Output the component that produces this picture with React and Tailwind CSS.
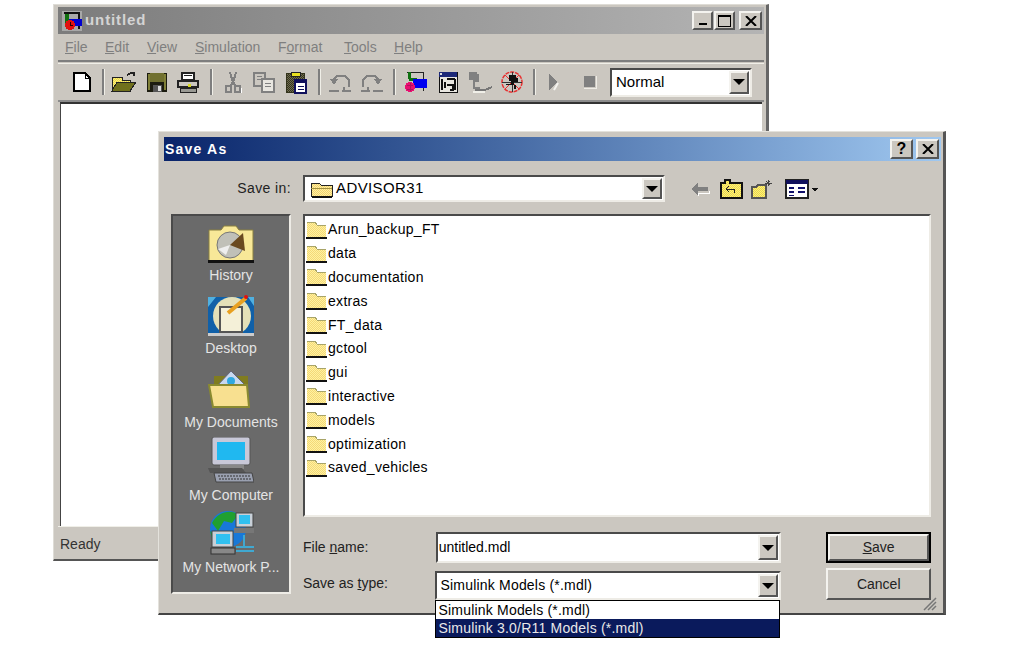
const sunken = "border-2 border-t-[#4a4a4a] border-l-[#4a4a4a] border-r-[#eeece6] border-b-[#eeece6]";
const raised = "border-2 border-t-[#f4f3ef] border-l-[#f4f3ef] border-r-[#555] border-b-[#555]";

function Dither({ id, a = "#ffff66", b = "#e8c860" }) {
	return (
		<pattern id={id} width="2" height="2" patternUnits="userSpaceOnUse">
			<rect width="2" height="2" fill={a} />
			<rect width="1" height="1" fill={b} />
			<rect x="1" y="1" width="1" height="1" fill={b} />
		</pattern>
	);
}

function Px({ children, w = 24, h = 24, className = "" }) {
	return (
		<svg width={w} height={h} viewBox={`0 0 ${w} ${h}`} shapeRendering="crispEdges" className={`block ${className}`}>
			{children}
		</svg>
	);
}

const NewIcon = () => (
	<Px>
		<path d="M4 3h11l5 5v13H4z" fill="#fff" stroke="#000" strokeWidth="2" />
		<path d="M15 3v5h5" fill="none" stroke="#000" strokeWidth="1" />
	</Px>
);
const OpenIcon = () => (
	<Px w={26}>
		<defs><Dither id="open" /></defs>
		<path d="M1 7h10v3h8v11H1z" fill="url(#open)" stroke="#222" />
		<path d="M1 21l5-9h19l-6 9z" fill="#70701c" stroke="#222" />
		<path d="M16 5l4-2h3v1M23 3v3" fill="none" stroke="#222" strokeWidth="2" />
	</Px>
);
const SaveIcon = () => (
	<Px w={22}>
		<rect x="1" y="3" width="20" height="19" fill="#1c1c10" />
		<rect x="4" y="3" width="14" height="9" fill="#707030" />
		<rect x="2" y="4" width="2" height="16" fill="#808038" />
		<rect x="18" y="4" width="2" height="16" fill="#808038" />
		<rect x="7" y="15" width="9" height="7" fill="#555" />
		<rect x="12" y="16" width="3" height="5" fill="#ddd" />
	</Px>
);
const PrintIcon = () => (
	<Px w={24}>
		<path d="M6 3h12v7H6z" fill="#fff" stroke="#222" strokeWidth="2" />
		<path d="M2 11h20v6H2z" fill="#cbc7c0" stroke="#222" strokeWidth="2" />
		<path d="M4 18h16v4H4z" fill="#9a9a94" stroke="#222" />
		<rect x="8" y="5" width="8" height="1" fill="#222" />
		<rect x="12" y="14" width="3" height="3" fill="#d8d820" />
	</Px>
);
const CutIcon = () => (
	<Px>
		<path d="M9 2l3 11 3-11" fill="none" stroke="#808080" strokeWidth="2" />
		<path d="M12 12l-3 4M12 12l3 4" stroke="#808080" strokeWidth="2" />
		<rect x="5" y="16" width="5" height="6" fill="none" stroke="#808080" strokeWidth="2" />
		<rect x="14" y="16" width="5" height="6" fill="none" stroke="#808080" strokeWidth="2" />
		<path d="M20 18v5" stroke="#fff" />
	</Px>
);
const CopyIcon = () => (
	<Px>
		<rect x="2" y="3" width="11" height="13" fill="#cbc7c0" stroke="#808080" strokeWidth="2" />
		<rect x="5" y="6" width="5" height="1" fill="#808080" />
		<rect x="5" y="9" width="5" height="1" fill="#808080" />
		<rect x="10" y="9" width="12" height="13" fill="#e8e6e0" stroke="#808080" strokeWidth="2" />
		<rect x="13" y="13" width="6" height="1" fill="#808080" />
		<rect x="13" y="16" width="6" height="1" fill="#808080" />
	</Px>
);
const PasteIcon = () => (
	<Px>
		<defs><Dither id="paste" a="#6e6a50" b="#34341c" /></defs>
		<rect x="2" y="3" width="18" height="19" fill="url(#paste)" stroke="#33331c" />
		<rect x="7" y="2" width="9" height="4" fill="#e8e020" stroke="#222" />
		<rect x="11" y="10" width="11" height="13" fill="#fff" stroke="#10105c" strokeWidth="2" />
		<rect x="11" y="10" width="11" height="3" fill="#10105c" />
		<rect x="14" y="16" width="6" height="1" fill="#10105c" />
		<rect x="14" y="19" width="6" height="1" fill="#10105c" />
	</Px>
);
const UndoIcon = ({ flip }) => (
	<Px className={flip ? "-scale-x-100" : ""}>
		<path d="M6 14V9l3-3h8l4 4v7" fill="none" stroke="#808080" strokeWidth="2" />
		<path d="M2 9h8l-4 6z" fill="#808080" />
		<rect x="1" y="20" width="10" height="2" fill="#808080" />
		<rect x="14" y="20" width="9" height="2" fill="#808080" />
		<rect x="15" y="17" width="2" height="3" fill="#808080" />
	</Px>
);
const LibIcon = () => (
	<Px>
		<path d="M3 2h16M19 2v19" stroke="#222" strokeWidth="1" fill="none" />
		<rect x="4" y="2" width="3" height="7" fill="#107010" />
		<rect x="5" y="8" width="8" height="3" fill="#107010" />
		<rect x="9" y="9" width="14" height="9" fill="#0000f0" />
		<circle cx="6" cy="17" r="5" fill="#e81070" />
		<path d="M3 15h6M3 19h6M6 13v8" stroke="#b01060" />
	</Px>
);
const ModelIcon = () => (
	<Px w={22}>
		<rect x="2" y="2" width="18" height="20" fill="#e8e6e0" stroke="#111" />
		<rect x="2" y="2" width="18" height="5" fill="#1c2878" />
		<path d="M5 9v11M10 9h8M18 9v11M10 15h6v5h-3M8 12v6" stroke="#111" fill="none" strokeWidth="2" />
		<rect x="3" y="3" width="2" height="2" fill="#ddd" />
	</Px>
);
const DebugIcon = () => (
	<Px w={26}>
		<path d="M2 2h8v2h2v8h-6v-2h-4z" fill="#808080" />
		<path d="M7 12v6h6" stroke="#808080" strokeWidth="2" fill="none" />
		<path d="M8 20h10l7-3" stroke="#777" strokeWidth="2" fill="none" />
		<path d="M6 22h12" stroke="#f0efe8" strokeWidth="2" />
	</Px>
);
const BanIcon = () => (
	<Px>
		<circle cx="12" cy="12" r="10" fill="#cbc7c0" stroke="#e83030" strokeWidth="1.5" strokeDasharray="4 1" shapeRendering="auto" />
		<path d="M5 5l14 14M19 5L5 19" stroke="#e83030" />
		<path d="M2 12h20M12 2v20" stroke="#333" />
		<path d="M9 5h7v3h2v4h-4v3h-3v-4H9z" fill="#111" />
		<path d="M6 14h5v1H6zM14 15h2v4h-2z" fill="#111" />
	</Px>
);
const PlayIcon = () => (
	<Px w={14}>
		<path d="M3 3l8 9-8 9z" fill="#808080" />
		<path d="M8 20l4-7" stroke="#f4f3ef" strokeWidth="2" shapeRendering="auto" />
	</Px>
);
const StopIcon = () => (
	<Px w={14} h={14}>
		<rect x="1" y="1" width="11" height="11" fill="#808080" />
		<path d="M13 1v12H1" fill="none" stroke="#eeece6" />
	</Px>
);

function Sep({ w }) {
	return (
		<div className={`flex justify-center ${w}`}>
			<div className="w-[3px] h-[26px] bg-[#7e7e7e] border-r border-r-[#f0efe8]" />
		</div>
	);
}

function Tool({ w, children }) {
	return <div className={`flex justify-center ${w}`}>{children}</div>;
}

function DownBtn({ size = "w-[20px]" }) {
	return (
		<div className={`${size} h-full bg-[#cbc7c0] flex items-center justify-center ${raised}`}>
			<div className="border-x-[6px] border-x-transparent border-t-[6px] border-t-black" />
		</div>
	);
}

function Combo({ className = "", text, textClass = "" }) {
	return (
		<div className={`bg-white flex items-stretch ${sunken} ${className}`}>
			<div className={`flex-1 flex items-center text-black overflow-hidden whitespace-nowrap ${textClass}`}>{text}</div>
			<div className="p-[1px]"><DownBtn /></div>
		</div>
	);
}

function MainWindow() {
	return (
		<div className="absolute left-[53px] top-[4px] w-[716px] h-[557px] bg-[#cbc7c0] flex flex-col pl-[4px] pr-[2px] pt-[2px] border border-t-[#dedcd6] border-l-[#dedcd6] border-r-[3px] border-r-[#666] border-b-2 border-b-[#555]">
			<div className="h-[27px] shrink-0 flex items-center bg-gradient-to-r from-[#7c7c7c] to-[#b4b4b4] pl-[4px] pr-[2px]">
				<Px w={20} h={20}>
					<rect width="20" height="20" fill="#a8a8a8" />
					<path d="M2 2h15v16" fill="none" stroke="#111" strokeWidth="2" />
					<rect x="3" y="3" width="4" height="9" fill="#107010" />
					<rect x="7" y="8" width="13" height="7" fill="#0000d0" />
					<circle cx="8" cy="14" r="5" fill="#e01010" />
					<path d="M8 11v3h3" stroke="#300" fill="none" />
				</Px>
				<span className="ml-[3px] text-[15px] font-bold text-[#d4d4d4] tracking-[0.9px]">untitled</span>
				<div className="ml-auto flex">
					<div className={`w-[21px] h-[19px] bg-[#cbc7c0] flex items-end justify-center pb-[3px] ${raised}`}><div className="w-[8px] h-[2px] bg-black" /></div>
					<div className={`ml-[1px] w-[21px] h-[19px] bg-[#cbc7c0] flex items-center justify-center ${raised}`}><div className="w-[13px] h-[12px] border border-t-2 border-black" /></div>
					<div className={`ml-[4px] w-[23px] h-[19px] bg-[#cbc7c0] flex items-center justify-center ${raised}`}>
						<svg width="12" height="10" viewBox="0 0 12 10"><path d="M1 0l10 10M11 0L1 10" stroke="#000" strokeWidth="2" /></svg>
					</div>
				</div>
			</div>
			<div className="h-[26px] shrink-0 flex items-center text-[14px] text-[#7f7f7f] pl-[7px] pt-[1px]">
				<span className="w-[40px]"><u>F</u>ile</span>
				<span className="w-[42px]"><u>E</u>dit</span>
				<span className="w-[48px]"><u>V</u>iew</span>
				<span className="w-[83px]"><u>S</u>imulation</span>
				<span className="w-[66px]">F<u>o</u>rmat</span>
				<span className="w-[50px]"><u>T</u>ools</span>
				<span><u>H</u>elp</span>
			</div>
			<div className="h-[4px] shrink-0 border-t-2 border-t-[#7e7e7e] border-b border-b-[#f0efe8]" />
			<div className="h-[38px] shrink-0 flex items-center pl-[8px] border-b-2 border-b-[#8c8c8c]">
				<Tool w="w-[32px]"><NewIcon /></Tool>
				<Sep w="w-[10px]" />
				<Tool w="w-[32px]"><OpenIcon /></Tool>
				<Tool w="w-[34px]"><SaveIcon /></Tool>
				<Tool w="w-[28px]"><PrintIcon /></Tool>
				<Sep w="w-[18px]" />
				<Tool w="w-[26px]"><CutIcon /></Tool>
				<Tool w="w-[36px]"><CopyIcon /></Tool>
				<Tool w="w-[28px]"><PasteIcon /></Tool>
				<Sep w="w-[18px]" />
				<Tool w="w-[24px]"><UndoIcon /></Tool>
				<Tool w="w-[40px]"><UndoIcon flip /></Tool>
				<Sep w="w-[4px]" />
				<Tool w="w-[40px]"><LibIcon /></Tool>
				<Tool w="w-[24px]"><ModelIcon /></Tool>
				<Tool w="w-[40px]"><DebugIcon /></Tool>
				<Tool w="w-[24px]"><BanIcon /></Tool>
				<Sep w="w-[20px]" />
				<Tool w="w-[18px]"><PlayIcon /></Tool>
				<div className="w-[48px] pl-[21px]"><StopIcon /></div>
				<Combo className="w-[142px] h-[29px]" text="Normal" textClass="pl-[4px] text-[15px]" />
			</div>
			<div className="h-[424px] shrink-0 mx-[2px] bg-white border-t-2 border-t-[#333] border-l border-l-[#444]" />
			<div className="flex-1 flex items-center pl-[2px] pt-[2px] text-[14px] text-[#333] border-t border-t-[#f0efe8]">Ready</div>
		</div>
	);
}

const FolderIcon = ({ id }) => (
	<Px w={21} h={20}>
		<defs><Dither id={id} a="#fff2a0" b="#f4d878" /></defs>
		<path d="M1 2h8l2 3h9v13H1z" fill={`url(#${id})`} />
		<path d="M1 2h8l2 3h9" fill="none" stroke="#a8a468" />
		<path d="M0 18h21" stroke="#111" strokeWidth="2" />
	</Px>
);

function HistoryIcon() {
	return (
		<svg width="46" height="38" viewBox="0 0 46 38" className="block">
			<path d="M1 5h12l3-4h12l3 4h14v31H1z" fill="#f8e898" stroke="#8a8040" />
			<rect x="0" y="35" width="46" height="3" fill="#111" />
			<circle cx="22" cy="20" r="13" fill="#c0c0b8" stroke="#777" />
			<path d="M22 20L35 8l2 18z" fill="#6a4a20" />
			<path d="M10 24l12-4-4 10z" fill="#eee" />
		</svg>
	);
}
function DesktopIcon() {
	return (
		<svg width="46" height="41" viewBox="0 0 46 41" className="block">
			<rect x="0" y="2" width="46" height="37" fill="#1060a8" />
			<path d="M0 2h8L0 12zM46 2h-6l6 9z" fill="#50b0e0" />
			<circle cx="24" cy="21" r="19" fill="#e4e0b8" />
			<rect x="12" y="12" width="22" height="25" fill="#f4f0d8" stroke="#555" strokeWidth="2" />
			<path d="M20 18L38 3" stroke="#e8a020" strokeWidth="4" />
			<circle cx="38" cy="2" r="2" fill="#e01010" />
			<rect x="0" y="38" width="46" height="3" fill="#ccc" />
		</svg>
	);
}
function DocsIcon() {
	return (
		<svg width="46" height="40" viewBox="0 0 46 40" className="block">
			<path d="M6 6h34v31H6z" fill="#807c20" />
			<path d="M23 1l16 16H8z" fill="#c8d8f0" stroke="#667" />
			<circle cx="23" cy="11" r="4" fill="#30a8e0" />
			<path d="M1 15h38l2 22H5z" fill="#f8e090" stroke="#8a8a30" strokeWidth="2" />
		</svg>
	);
}
function ComputerIcon() {
	return (
		<svg width="46" height="46" viewBox="0 0 46 46" className="block">
			<rect x="4" y="0" width="38" height="28" rx="2" fill="#c8c8d8" stroke="#555" />
			<rect x="9" y="5" width="28" height="18" fill="#20b8f0" />
			<rect x="12" y="28" width="24" height="4" fill="#888" />
			<path d="M0 31h34l4 5H2z" fill="#555" />
			<path d="M6 36h38l2 9H8z" fill="#9aa0b0" stroke="#444" />
			<path d="M10 39h32M11 42h32" stroke="#333" strokeDasharray="2 1" />
		</svg>
	);
}
function NetworkIcon() {
	return (
		<svg width="46" height="44" viewBox="0 0 46 44" className="block">
			<circle cx="20" cy="18" r="18" fill="#1878d8" />
			<path d="M4 12C10 0 24-2 30 4L24 12l-8-2-6 10zM2 20l10 8-6 6z" fill="#20a030" />
			<rect x="28" y="2" width="17" height="14" fill="#c8d0d8" stroke="#444" />
			<rect x="31" y="4" width="11" height="9" fill="#30c0f0" />
			<rect x="26" y="17" width="20" height="5" fill="#777" />
			<rect x="4" y="20" width="21" height="16" fill="#c8d0d8" stroke="#444" />
			<rect x="8" y="23" width="14" height="10" fill="#30c0f0" />
			<rect x="3" y="37" width="24" height="6" fill="#888" stroke="#333" />
			<path d="M28 36h18M28 40h18M36 24v12" stroke="#40a8d0" strokeWidth="2" />
		</svg>
	);
}

const places = [
	{ label: "History", icon: <HistoryIcon />, h: "h-[68px]" },
	{ label: "Desktop", icon: <DesktopIcon />, h: "h-[73px]" },
	{ label: "My Documents", icon: <DocsIcon />, h: "h-[74px]" },
	{ label: "My Computer", icon: <ComputerIcon />, h: "h-[73px]" },
	{ label: "My Network P...", icon: <NetworkIcon />, h: "h-[72px]" },
];

function Place({ place }) {
	return (
		<div className={`${place.h} flex flex-col items-center justify-end text-[#e4e4e4] text-[14px] leading-[18px] whitespace-nowrap`}>
			{place.icon}
			<span className="mt-[3px]">{place.label}</span>
		</div>
	);
}

const folders = ["Arun_backup_FT", "data", "documentation", "extras", "FT_data", "gctool", "gui", "interactive", "models", "optimization", "saved_vehicles"];

function Dialog() {
	return (
		<div className="absolute left-[158px] top-[131px] w-[788px] h-[484px] bg-[#cbc7c0] pl-[5px] pr-[2px] pt-[5px] border border-t-[#e4e2dc] border-l-[#e4e2dc] border-r-[3px] border-r-[#555] border-b-2 border-b-[#444] text-[14px] text-[#222]">
			<div className="h-[24px] flex items-center bg-gradient-to-r from-[#0a246a] to-[#a0c8f0] pl-[1px] pr-[2px]">
				<span className="font-bold text-white tracking-[1.2px]">Save As</span>
				<div className="ml-auto flex gap-[3px]">
					<div className={`w-[23px] h-[20px] bg-[#cbc7c0] flex items-center justify-center font-bold text-black text-[16px] leading-none ${raised}`}>?</div>
					<div className={`w-[23px] h-[20px] bg-[#cbc7c0] flex items-center justify-center ${raised}`}>
						<svg width="12" height="10" viewBox="0 0 12 10"><path d="M1 0l10 10M11 0L1 10" stroke="#000" strokeWidth="2" /></svg>
					</div>
				</div>
			</div>
			<div className="mt-[14px] h-[27px] flex items-center">
				<span className="w-[127px] text-right tracking-[0.4px]">Save in:</span>
				<div className={`ml-[12px] w-[362px] h-[27px] bg-white flex items-stretch ${sunken}`}>
					<div className="flex-1 flex items-center pl-[5px] gap-[2px] text-black text-[15px] tracking-[0.4px]">
						<Px w={24} h={18}>
							<defs><Dither id="savein" a="#fff0a0" b="#f0d070" /></defs>
							<path d="M1 3h8l2 2h11v11H1z" fill="url(#savein)" stroke="#222" />
							<path d="M1 8h21" stroke="#a09040" />
							<path d="M2 17h20" stroke="#111" strokeWidth="2" />
						</Px>
						ADVISOR31
					</div>
					<div className="p-[1px]"><DownBtn /></div>
				</div>
				<div className="ml-[25px]">
					<Px w={20} h={20}>
						<path d="M1 10l7-6v4h10v4H8v4z" fill="#808080" />
						<path d="M8 17v-3h11v-2" stroke="#fff" fill="none" />
					</Px>
				</div>
				<div className="ml-[10px]">
					<Px w={24} h={20}>
						<defs><Dither id="up" /></defs>
						<path d="M1 4h4V1h5v3h12v15H1z" fill="url(#up)" stroke="#111" strokeWidth="2" />
						<path d="M6 10h8M9 7l-3 3 3 3M14 10v4" stroke="#222" fill="none" />
					</Px>
				</div>
				<div className="ml-[7px]">
					<Px w={24} h={20}>
						<defs><Dither id="newf" /></defs>
						<path d="M1 8h4l2-2h8v13H1z" fill="url(#newf)" stroke="#555" strokeWidth="2" />
						<path d="M17 7V1M14 4h7M15 2l4 4M19 2l-4 4" stroke="#444" />
					</Px>
				</div>
				<div className="ml-[10px]">
					<Px w={33} h={20}>
						<rect x="1" y="1" width="22" height="18" fill="#fff" stroke="#222" strokeWidth="2" />
						<rect x="1" y="1" width="22" height="4" fill="#10105c" />
						<rect x="4" y="8" width="5" height="2" fill="#10106c" />
						<rect x="13" y="8" width="7" height="2" fill="#10106c" />
						<rect x="4" y="12" width="5" height="2" fill="#10106c" />
						<rect x="13" y="12" width="7" height="2" fill="#10106c" />
						<rect x="4" y="16" width="5" height="1" fill="#10106c" />
						<path d="M26 9h7l-3 3z" fill="#111" />
					</Px>
				</div>
			</div>
			<div className="mt-[12px] flex">
				<div className={`ml-[7px] w-[120px] h-[380px] bg-[#6a6a6a] ${sunken}`}>
					{places.map((p) => <Place key={p.label} place={p} />)}
				</div>
				<div className="ml-[12px] w-[628px]">
					<div className={`h-[303px] bg-white pl-[1px] pt-[2px] ${sunken}`}>
						{folders.map((f, i) => (
							<div key={f} className="h-[23.8px] flex items-center text-black text-[14px] tracking-[0.3px]">
								<FolderIcon id={`folder${i}`} />
								<span className="ml-[1px]">{f}</span>
							</div>
						))}
					</div>
					<div className="mt-[15px] flex items-center h-[31px]">
						<span className="w-[133px]"><span>File <u>n</u>ame:</span></span>
						<Combo className="w-[346px] h-[31px]" text="untitled.mdl" textClass="pl-[1px] text-[14px]" />
						<div className="ml-[45px] w-[105px] h-[31px] border-2 border-black">
							<div className={`h-full flex items-center justify-center ${raised}`}><span><u>S</u>ave</span></div>
						</div>
					</div>
					<div className="mt-[5px] flex h-[32px]">
						<span className="w-[133px] pt-[5px]">Save as <u>t</u>ype:</span>
						<div className="relative pt-[3px]">
							<Combo className="w-[346px] h-[29px]" text="Simulink Models (*.mdl)" textClass="pl-[3px] text-[14px] tracking-[0.2px]" />
							<div className="absolute left-0 top-[32px] w-[345px] h-[38px] bg-white border border-black text-[14px] leading-[18px] whitespace-nowrap">
								<div className="h-[18px] pl-[2px] text-black tracking-[0.2px]">Simulink Models (*.mdl)</div>
								<div className="h-[18px] pl-[2px] bg-[#0a1a5c] text-[#e8e8e8] tracking-[0.2px]">Simulink 3.0/R11 Models (*.mdl)</div>
							</div>
						</div>
						<div className={`ml-[45px] w-[105px] h-[32px] flex items-center justify-center ${raised}`}>Cancel</div>
					</div>
				</div>
			</div>
			<svg width="14" height="14" viewBox="0 0 14 14" className="absolute right-[6px] bottom-[2px]">
				<path d="M13 1L1 13M13 5l-8 8M13 9l-4 4" stroke="#777" strokeWidth="1.5" />
			</svg>
		</div>
	);
}

export default function App() {
	return (
		<div className="relative w-[1019px] h-[653px] bg-white overflow-hidden font-['Liberation_Sans',Arial,sans-serif]">
			<MainWindow />
			<Dialog />
		</div>
	);
}
